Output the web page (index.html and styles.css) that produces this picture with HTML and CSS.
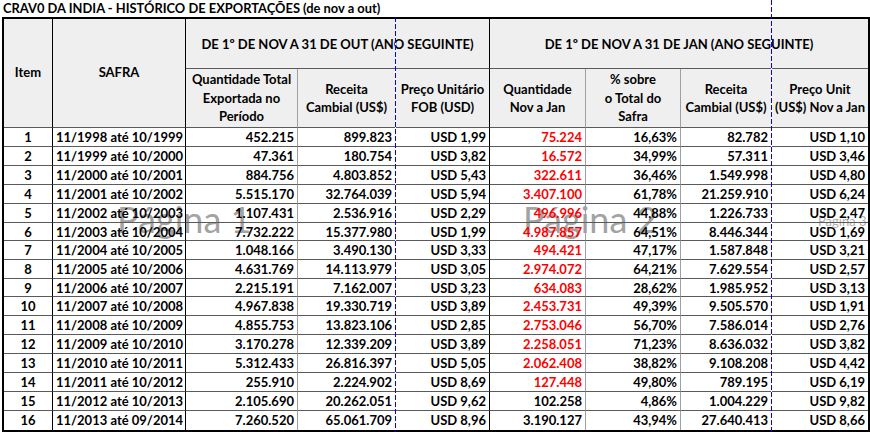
FILE: index.html
```html
<!DOCTYPE html>
<html lang="pt">
<head>
<meta charset="utf-8">
<title>Cravo da India - Histórico de Exportações</title>
<link rel="stylesheet" href="styles.css">
</head>
<body>
<div class="sheet">
  <div class="title">CRAV0 DA INDIA - HISTÓRICO DE EXPORTAÇÕES (de nov a out)</div>
  <div class="grid">
    <div class="h item">Item</div>
    <div class="h safra">SAFRA</div>
    <div class="h grp1">DE 1º DE NOV A 31 DE OUT (ANO SEGUINTE)</div>
    <div class="h grp2">DE 1º DE NOV A 31 DE JAN (ANO SEGUINTE)</div>
    <div class="h sub">Quantidade Total<br>Exportada no<br>Período</div>
    <div class="h sub">Receita<br>Cambial (US$)</div>
    <div class="h sub thick">Preço Unitário<br>FOB (USD)</div>
    <div class="h sub">Quantidade<br>Nov a Jan</div>
    <div class="h sub">% sobre<br>o Total do<br>Safra</div>
    <div class="h sub">Receita<br>Cambial (US$)</div>
    <div class="h sub last">Preço Unit<br>(US$) Nov a Jan</div>

    <div class="row"><div>1</div><div>11/1998 até 10/1999</div><div>452.215</div><div>899.823</div><div>USD 1,99</div><div class="red">75.224</div><div>16,63%</div><div>82.782</div><div>USD 1,10</div></div>
    <div class="row"><div>2</div><div>11/1999 até 10/2000</div><div>47.361</div><div>180.754</div><div>USD 3,82</div><div class="red">16.572</div><div>34,99%</div><div>57.311</div><div>USD 3,46</div></div>
    <div class="row"><div>3</div><div>11/2000 até 10/2001</div><div>884.756</div><div>4.803.852</div><div>USD 5,43</div><div class="red">322.611</div><div>36,46%</div><div>1.549.998</div><div>USD 4,80</div></div>
    <div class="row"><div>4</div><div>11/2001 até 10/2002</div><div>5.515.170</div><div>32.764.039</div><div>USD 5,94</div><div class="red">3.407.100</div><div>61,78%</div><div>21.259.910</div><div>USD 6,24</div></div>
    <div class="row"><div>5</div><div>11/2002 até 10/2003</div><div>1.107.431</div><div>2.536.916</div><div>USD 2,29</div><div class="red">496.996</div><div>44,88%</div><div>1.226.733</div><div>USD 2,47</div></div>
    <div class="row"><div>6</div><div>11/2003 até 10/2004</div><div>7.732.222</div><div>15.377.980</div><div>USD 1,99</div><div class="red">4.987.857</div><div>64,51%</div><div>8.446.344</div><div>USD 1,69</div></div>
    <div class="row"><div>7</div><div>11/2004 até 10/2005</div><div>1.048.166</div><div>3.490.130</div><div>USD 3,33</div><div class="red">494.421</div><div>47,17%</div><div>1.587.848</div><div>USD 3,21</div></div>
    <div class="row"><div>8</div><div>11/2005 até 10/2006</div><div>4.631.769</div><div>14.113.979</div><div>USD 3,05</div><div class="red">2.974.072</div><div>64,21%</div><div>7.629.554</div><div>USD 2,57</div></div>
    <div class="row"><div>9</div><div>11/2006 até 10/2007</div><div>2.215.191</div><div>7.162.007</div><div>USD 3,23</div><div class="red">634.083</div><div>28,62%</div><div>1.985.952</div><div>USD 3,13</div></div>
    <div class="row"><div>10</div><div>11/2007 até 10/2008</div><div>4.967.838</div><div>19.330.719</div><div>USD 3,89</div><div class="red">2.453.731</div><div>49,39%</div><div>9.505.570</div><div>USD 1,91</div></div>
    <div class="row"><div>11</div><div>11/2008 até 10/2009</div><div>4.855.753</div><div>13.823.106</div><div>USD 2,85</div><div class="red">2.753.046</div><div>56,70%</div><div>7.586.014</div><div>USD 2,76</div></div>
    <div class="row"><div>12</div><div>11/2009 até 10/2010</div><div>3.170.278</div><div>12.339.209</div><div>USD 3,89</div><div class="red">2.258.051</div><div>71,23%</div><div>8.636.032</div><div>USD 3,82</div></div>
    <div class="row"><div>13</div><div>11/2010 até 10/2011</div><div>5.312.433</div><div>26.816.397</div><div>USD 5,05</div><div class="red">2.062.408</div><div>38,82%</div><div>9.108.208</div><div>USD 4,42</div></div>
    <div class="row"><div>14</div><div>11/2011 até 10/2012</div><div>255.910</div><div>2.224.902</div><div>USD 8,69</div><div class="red">127.448</div><div>49,80%</div><div>789.195</div><div>USD 6,19</div></div>
    <div class="row"><div>15</div><div>11/2012 até 10/2013</div><div>2.105.690</div><div>20.262.051</div><div>USD 9,62</div><div>102.258</div><div>4,86%</div><div>1.004.229</div><div>USD 9,82</div></div>
    <div class="row"><div>16</div><div>11/2013 até 09/2014</div><div>7.260.520</div><div>65.061.709</div><div>USD 8,96</div><div>3.190.127</div><div>43,94%</div><div>27.640.413</div><div>USD 8,66</div></div>
  </div>

  <div class="mark mark1">Página 1</div>
  <div class="mark mark2">Página 2</div>
  <div class="mark mark3">Página 3</div>

  <div class="pagebreak pb1"></div>
  <div class="pagebreak pb2"></div>
</div>
</body>
</html>
```

FILE: styles.css
```css
html, body {
  margin: 0;
  padding: 0;
  background: #ffffff;
}

.sheet {
  position: relative;
  width: 870px;
  height: 432px;
  overflow: hidden;
  font-family: Lato, "Open Sans", sans-serif;
  font-weight: 700;
  font-size: 13px;
  color: #000;
}

.title {
  height: 17px;
  line-height: 17px;
  padding-left: 3px;
  font-size: 12.9px;
  white-space: nowrap;
}

.grid {
  position: relative;
  z-index: 1;
  margin-left: 2px;
  width: 868px;
  box-sizing: border-box;
  border: 2px solid #000;
  display: grid;
  grid-template-columns: 49px 133px 112px 98px 94px 96px 95px 91px 96px;
  grid-template-rows: 50px 59px 19px 19px 19px 19px 19px 18px 19px 19px 18px 19px 19px 19px 19px 19px 19px 19px;
}

.grid > div:not(.row),
.row > div {
  box-sizing: border-box;
  border-right: 1px solid #a0a0a0;
  border-bottom: 1px solid #5a5a5a;
  white-space: nowrap;
  overflow: hidden;
}

.h {
  background: #efefef;
  display: flex;
  align-items: center;
  justify-content: center;
  text-align: center;
  line-height: 18.5px;
}

.item {
  grid-column: 1;
  grid-row: 1 / span 2;
  border-right-color: #000 !important;
  padding-bottom: 2px;
}

.safra {
  grid-column: 2;
  grid-row: 1 / span 2;
  border-right-color: #000 !important;
  padding-bottom: 2px;
}

.grp1 {
  grid-column: 3 / span 3;
  grid-row: 1;
  border-right-color: #000 !important;
  padding-top: 1px;
}

.grp2 {
  grid-column: 6 / span 4;
  grid-row: 1;
  border-right: none !important;
  padding-top: 1px;
}

.sub {
  grid-row: 2;
}

.thick {
  border-right-color: #000 !important;
}

.last {
  border-right: none !important;
}

.row {
  display: contents;
}

.row > div {
  line-height: 18px;
  text-align: right;
  padding-right: 3px;
}

.row > div:nth-child(1),
.row > div:nth-child(2) {
  text-align: center;
  padding-right: 0;
  border-right-color: #000;
}

.row > div:nth-child(2) {
  padding-left: 1px;
}

.row > div:nth-child(5) {
  border-right-color: #000;
}

.row > div:nth-child(9) {
  border-right: none;
}

.row:last-child > div {
  border-bottom: none;
}

.red {
  color: #ff0000;
}

.mark {
  position: absolute;
  z-index: 0;
  font-family: Lato, "Open Sans", sans-serif;
  font-weight: 400;
  color: #a3a3a3;
  line-height: 1;
  white-space: nowrap;
}

.mark1 {
  left: 117px;
  top: 201px;
  font-size: 36px;
}

.mark2 {
  left: 523px;
  top: 201px;
  font-size: 36px;
}

.mark3 {
  left: 818px;
  top: 215px;
  font-size: 13px;
  color: #b0b0b0;
}

.pagebreak {
  position: absolute;
  z-index: 2;
  width: 1px;
  background: repeating-linear-gradient(to bottom, #0000ff 0, #0000ff 5px, #ffffff 5px, #ffffff 7px);
}

.pb1 {
  left: 395px;
  top: 17px;
  height: 415px;
}

.pb2 {
  left: 771px;
  top: 0;
  height: 432px;
}
```
